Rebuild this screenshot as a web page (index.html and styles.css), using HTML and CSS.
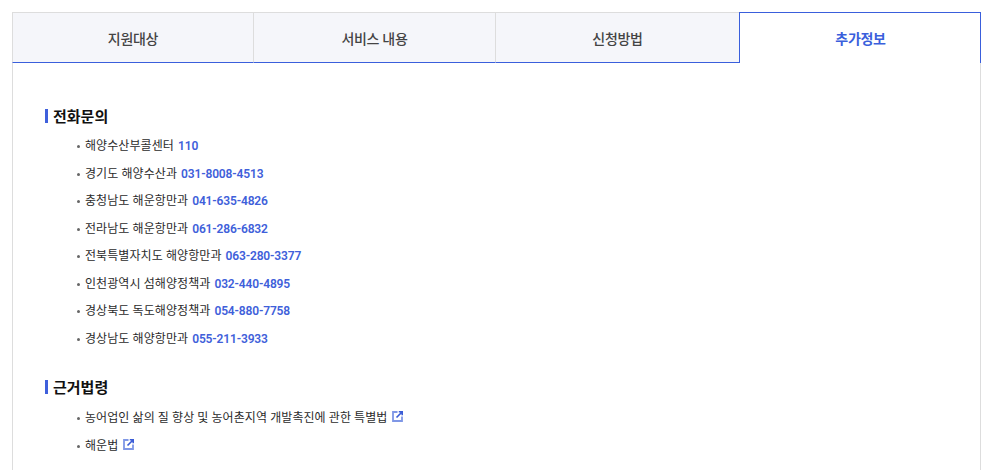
FILE: index.html
```html
<!DOCTYPE html>
<html lang="ko">
<head>
<meta charset="utf-8">
<title>추가정보</title>
<link rel="stylesheet" href="styles.css">
</head>
<body>
<div class="wrap">
  <ul class="tabs">
    <li class="tab t1">지원대상</li>
    <li class="tab t2">서비스 내용</li>
    <li class="tab t3">신청방법</li>
    <li class="tab t4 on">추가정보</li>
  </ul>
  <div class="panel">
    <h3 class="title">전화문의</h3>
    <ul class="list">
      <li>해양수산부콜센터 <b>110</b></li>
      <li>경기도 해양수산과 <b>031-8008-4513</b></li>
      <li>충청남도 해운항만과 <b>041-635-4826</b></li>
      <li>전라남도 해운항만과 <b>061-286-6832</b></li>
      <li>전북특별자치도 해양항만과 <b>063-280-3377</b></li>
      <li>인천광역시 섬해양정책과 <b>032-440-4895</b></li>
      <li>경상북도 독도해양정책과 <b>054-880-7758</b></li>
      <li>경상남도 해양항만과 <b>055-211-3933</b></li>
    </ul>
    <h3 class="title second">근거법령</h3>
    <ul class="list law">
      <li>농어업인 삶의 질 향상 및 농어촌지역 개발촉진에 관한 특별법<svg class="ext" viewBox="0 0 11 11"><path d="M5.5 1H1v9h9V5.5" fill="none" stroke="#7f97e6" stroke-width="1.8"/><path d="M4.5 6.5 10 1M6.8 .8H10.2V4.2" fill="none" stroke="#3a5cd6" stroke-width="1.6"/></svg></li>
      <li>해운법<svg class="ext" viewBox="0 0 11 11"><path d="M5.5 1H1v9h9V5.5" fill="none" stroke="#7f97e6" stroke-width="1.8"/><path d="M4.5 6.5 10 1M6.8 .8H10.2V4.2" fill="none" stroke="#3a5cd6" stroke-width="1.6"/></svg></li>
    </ul>
  </div>
</div>
</body>
</html>
```
FILE: styles.css
```css
* { box-sizing: border-box; }
html, body { margin: 0; padding: 0; background: #fff; overflow: hidden; }
body { font-family: Roboto, "Noto Sans CJK KR", sans-serif; color: #222; }
.wrap { margin: 12px 11px 0 12px; }
.tabs { display: flex; margin: 0; padding: 0; list-style: none; height: 51px; }
.tab {
  height: 51px;
  display: flex; align-items: center; justify-content: center;
  background: #f5f6fa;
  border-top: 1px solid #ddd;
  border-right: 1px solid #ddd;
  border-bottom: 1px solid #3a5fdc;
  font-size: 14px; font-weight: 500; color: #444;
  letter-spacing: -0.3px;
}
.t1 { width: 242px; border-left: 1px solid #ddd; }
.t2 { width: 242px; }
.t3 { width: 243px; border-right: 0; }
.t4 { width: 242px; }
.tab.on {
  background: #fff;
  color: #3a5fdc;
  font-weight: 700;
  border: 1px solid #3a5fdc;
  border-bottom: 0;
  padding-left: 1px;
}
.panel {
  border-left: 1px solid #ddd;
  border-right: 1px solid #ddd;
  padding: 44px 32px 0;
  height: 410px;
}
.title {
  margin: 0;
  font-size: 15px; font-weight: 700; line-height: 20px; color: #111;
  letter-spacing: 0;
  padding-left: 8px;
  position: relative;
}
.title::before {
  content: ""; position: absolute; left: 0; top: 2px;
  width: 3px; height: 14px; background: #3f60dc;
}
.second { margin-top: 25px; }
.list { margin: 6px 0 0; padding: 0 0 0 30px; list-style: none; }
.list li {
  position: relative;
  height: 27.5px; line-height: 27.5px;
  padding-left: 10px;
  font-size: 12px; color: #2b2b2b; letter-spacing: 0.08px;
  white-space: nowrap;
}
.list li::before {
  content: ""; position: absolute; left: 2px; top: 12px;
  width: 3px; height: 3px; border-radius: 50%; background: #666;
}
.list b { color: #4060da; font-weight: 600; letter-spacing: -0.15px; margin-left: 1px; }
.ext { width: 11px; height: 11px; margin-left: 5px; vertical-align: 0; }
.law { margin-top: 7px; }
```
